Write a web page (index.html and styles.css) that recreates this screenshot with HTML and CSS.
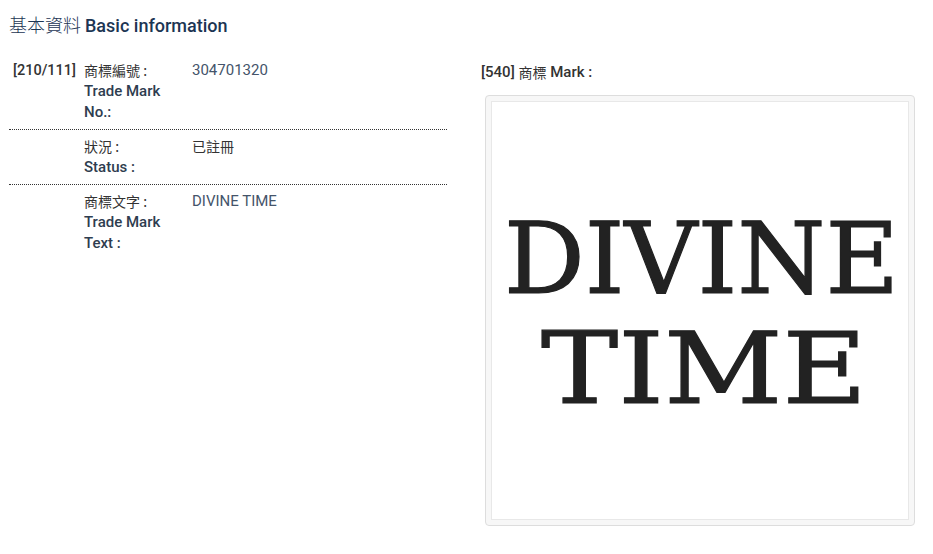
FILE: index.html
```html
<!DOCTYPE html>
<html lang="zh-Hant">
<head>
<meta charset="utf-8">
<title>Basic information</title>
<link rel="stylesheet" href="styles.css">
</head>
<body>
<div class="page">
  <h2 class="title"><span class="zh-title">基本資料</span> Basic information</h2>
  <div class="cols">
    <div class="table">
      <div class="row">
        <div class="code">[210/111]</div>
        <div class="label"><div class="zh">商標編號 :</div><div class="en">Trade Mark<br>No.:</div></div>
        <div class="value">304701320</div>
      </div>
      <div class="row">
        <div class="code"></div>
        <div class="label"><div class="zh">狀況 :</div><div class="en">Status :</div></div>
        <div class="value zh">已註冊</div>
      </div>
      <div class="row last">
        <div class="code"></div>
        <div class="label"><div class="zh">商標文字 :</div><div class="en">Trade Mark<br>Text :</div></div>
        <div class="value">DIVINE TIME</div>
      </div>
    </div>
    <div class="mark">
      <div class="mark-head"><b>[540]</b> <span class="zh-inline">商標</span> <b>Mark :</b></div>
      <div class="thumb">
        <div class="thumb-inner">
          <svg class="logo" viewBox="0 0 416 416" width="416" height="416">
            <text x="12" y="191" textLength="395" lengthAdjust="spacingAndGlyphs" class="logo-text">DIVINE</text>
            <text x="49" y="301" textLength="326" lengthAdjust="spacingAndGlyphs" class="logo-text">TIME</text>
          </svg>
        </div>
      </div>
    </div>
  </div>
</div>
</body>
</html>
```
FILE: styles.css
```css
html, body {
  margin: 0;
  padding: 0;
  background: #fff;
}
body {
  font-family: Roboto, "Noto Sans CJK TC", sans-serif;
  font-size: 15px;
  line-height: 21px;
  color: #2e3d4f;
}
.page {
  padding: 12px 0 0 9px;
  width: 906px;
}
.title {
  margin: 0;
  font-size: 18px;
  line-height: 24px;
  font-weight: 500;
  color: #1c3553;
  display: flex;
  align-items: baseline;
  gap: 4px;
}
.zh-title {
  font-family: "Noto Sans CJK TC", sans-serif;
  font-weight: 300;
  font-size: 18px;
  color: #1c3553;
}
.zh {
  font-family: "Noto Sans CJK TC", sans-serif;
  font-weight: 400;
  font-size: 14px;
  line-height: 21px;
}
.zh-inline {
  font-family: "Noto Sans CJK TC", sans-serif;
  font-size: 14px;
  vertical-align: top;
}
.cols {
  display: grid;
  grid-template-columns: 438px 1fr;
  column-gap: 34px;
  margin-top: 22px;
}
.table {
  display: flex;
  flex-direction: column;
}
.row {
  display: grid;
  grid-template-columns: 75px 108px 1fr;
  padding: 0 0 6px 0;
  border-bottom: 1px dotted #333;
  margin-bottom: 6px;
}
.row.last {
  border-bottom: none;
}
.code {
  padding-left: 4px;
  font-weight: 500;
  color: #333;
  font-size: 14.5px;
}
.label .zh {
  color: #333;
}
.label .en {
  font-weight: 500;
  color: #2e3d4f;
}
.value {
  color: #44546a;
}
.value.zh {
  color: #333;
}
.mark-head {
  color: #333;
  line-height: 21px;
  padding-top: 2px;
}
.mark-head b {
  font-weight: 500;
}
.thumb {
  margin-top: 12px;
  margin-left: 4px;
  width: 418px;
  height: 419px;
  padding: 5px;
  border: 1px solid #ddd;
  border-radius: 4px;
  background: #f7f7f7;
}
.thumb-inner {
  width: 416px;
  height: 417px;
  border: 1px solid #e8e8e8;
  background: #fff;
}
.logo {
  display: block;
}
.logo-text {
  font-family: "DejaVu Serif", serif;
  font-size: 100px;
  fill: #222;
  stroke: #222;
  stroke-width: 1.2px;
}
```
